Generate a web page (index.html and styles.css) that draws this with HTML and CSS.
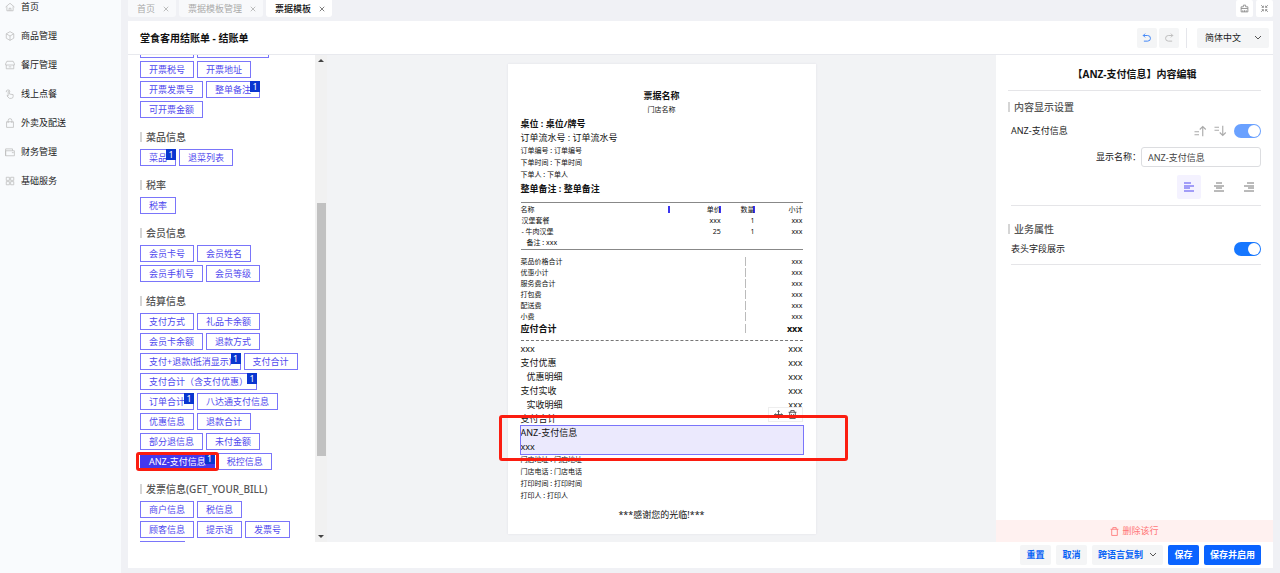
FILE: index.html
```
<!DOCTYPE html>
<html lang="zh-CN">
<head>
    <meta charset="UTF-8">
    <meta name="viewport" content="width=device-width, initial-scale=1.0">
    <title>票据模板</title>
    <link rel="stylesheet" href="styles.css">
</head>
<body>
    <nav class="sidebar">
        <a href="#" class="nav-item">
            <svg class="icon" viewBox="0 0 16 16"><path d="M1 8l7-6 7 6M3 7v7h10V7M6.500 14v-4h3v4"/></svg>首页
        </a>
        <a href="#" class="nav-item">
            <svg class="icon" viewBox="0 0 16 16"><path d="M8 1l6 3.500v7L8 15l-6-3.500v-7zM2 4.500L8 8l6-3.500M8 8v7"/></svg>商品管理
        </a>
        <a href="#" class="nav-item">
            <svg class="icon" viewBox="0 0 16 16"><path d="M3 2h10l2 4v2H1V6zM2 8v6h12V8M6 11h4"/></svg>餐厅管理
        </a>
        <a href="#" class="nav-item">
            <svg class="icon" viewBox="0 0 16 16"><path d="M2 5a3 3 0 0 1 6-1M5 4v7l-2-1M5 4q1-1 2 0v4l6 1v3q0 3-3 3H7l-4-4"/></svg>线上点餐
        </a>
        <a href="#" class="nav-item">
            <svg class="icon" viewBox="0 0 16 16"><path d="M2.500 6h11v9h-11zM5 8V4a3 3 0 0 1 6 0v4"/></svg>外卖及配送
        </a>
        <a href="#" class="nav-item">
            <svg class="icon" viewBox="0 0 16 16"><path d="M1 14V3h11v3M1 6h14v8H1zM11 9h3"/></svg>财务管理
        </a>
        <a href="#" class="nav-item">
            <svg class="icon" viewBox="0 0 16 16"><path d="M2 2h5v5H2zM9 2h5v5H9zM2 9h5v5H2zM9 9h5v5H9z"/></svg>基础服务
        </a>
    </nav>

    <div class="main">
        <div class="tabs">
            <a href="#" class="tab">首页<svg class="close" viewBox="0 0 8 8"><path d="M1 1l6 6M7 1L1 7"/></svg></a>
            <a href="#" class="tab">票据模板管理<svg class="close" viewBox="0 0 8 8"><path d="M1 1l6 6M7 1L1 7"/></svg></a>
            <a href="#" class="tab active">票据模板<svg class="close" viewBox="0 0 8 8"><path d="M1 1l6 6M7 1L1 7"/></svg></a>
            <div class="tab-tools">
                <button class="tab-tool" aria-label="清理"><svg class="icon" viewBox="0 0 16 16"><path d="M2 14V5h4V2h4v3h4v9zM2 8h12M5 14v-3M8 14v-3M11 14v-3"/></svg></button>
                <button class="tab-tool" aria-label="全屏"><svg class="icon" viewBox="0 0 16 16"><path d="M2 2l4 4M6 3v3H3M14 2l-4 4M10 3v3h3M2 14l4-4M3 10h3v3M14 14l-4-4M10 13v-3h3"/></svg></button>
            </div>
        </div>

        <div class="editor">
            <header class="editor-header">
                <h1 class="editor-title">堂食客用结账单 - 结账单</h1>
                <button class="tool undo" aria-label="撤销"><svg class="icon" viewBox="0 0 16 16"><path d="M5 1L2 4l3 3M2 4h7a4.500 4.500 0 0 1 0 9H3"/></svg></button>
                <button class="tool" aria-label="重做"><svg class="icon" viewBox="0 0 16 16"><path d="M11 1l3 3-3 3M14 4H7a4.500 4.500 0 0 0 0 9h6"/></svg></button>
                <span class="divider"></span>
                <div class="language">
                    <select aria-label="语言">
                        <option>简体中文</option>
                    </select>
                    <svg class="chevron" viewBox="0 0 8 8"><path d="M1 2l3 3 3-3"/></svg>
                </div>
            </header>

            <div class="editor-body">
                <aside class="fields">
                    <div class="field-list">
                        <div class="chips">
                            <div class="chip-row"><button class="chip">开票抬头</button><button class="chip">开票联系电话</button></div>
                            <div class="chip-row"><button class="chip">开票税号</button><button class="chip">开票地址</button></div>
                            <div class="chip-row"><button class="chip">开票发票号</button><button class="chip">整单备注<span class="badge">1</span></button></div>
                            <div class="chip-row"><button class="chip">可开票金额</button></div>
                        </div>
                        <h2 class="section-title">菜品信息</h2>
                        <div class="chips">
                            <div class="chip-row"><button class="chip">菜品<span class="badge">1</span></button><button class="chip">退菜列表</button></div>
                        </div>
                        <h2 class="section-title">税率</h2>
                        <div class="chips">
                            <div class="chip-row"><button class="chip">税率</button></div>
                        </div>
                        <h2 class="section-title">会员信息</h2>
                        <div class="chips">
                            <div class="chip-row"><button class="chip">会员卡号</button><button class="chip">会员姓名</button></div>
                            <div class="chip-row"><button class="chip">会员手机号</button><button class="chip">会员等级</button></div>
                        </div>
                        <h2 class="section-title">结算信息</h2>
                        <div class="chips">
                            <div class="chip-row"><button class="chip">支付方式</button><button class="chip">礼品卡余额</button></div>
                            <div class="chip-row"><button class="chip">会员卡余额</button><button class="chip">退款方式</button></div>
                            <div class="chip-row"><button class="chip">支付+退款(抵消显示)<span class="badge">1</span></button><button class="chip">支付合计</button></div>
                            <div class="chip-row"><button class="chip">支付合计（含支付优惠）<span class="badge">1</span></button></div>
                            <div class="chip-row"><button class="chip">订单合计<span class="badge">1</span></button><button class="chip">八达通支付信息</button></div>
                            <div class="chip-row"><button class="chip">优惠信息</button><button class="chip">退款合计</button></div>
                            <div class="chip-row"><button class="chip">部分退信息</button><button class="chip">未付金额</button></div>
                            <div class="chip-row"><button class="chip selected">ANZ-支付信息<span class="badge">1</span><span class="mark"></span></button><button class="chip">税控信息</button></div>
                        </div>
                        <h2 class="section-title">发票信息(GET_YOUR_BILL)</h2>
                        <div class="chips">
                            <div class="chip-row"><button class="chip">商户信息</button><button class="chip">税信息</button></div>
                            <div class="chip-row"><button class="chip">顾客信息</button><button class="chip">提示语</button><button class="chip">发票号</button></div>
                            <div class="chip-row"><button class="chip">交易号</button></div>
                        </div>
                    </div>
                    <div class="scrollbar">
                        <span class="arrow-up"></span>
                        <span class="track-before"></span>
                        <span class="thumb"></span>
                        <span class="track-after"></span>
                        <span class="arrow-down"></span>
                    </div>
                </aside>

                <main class="canvas">
                    <div class="receipt">
                        <p class="line center bold">票据名称</p>
                        <p class="line center small">门店名称</p>
                        <p class="line bold">桌位 : 桌位/牌号</p>
                        <p class="line">订单流水号 : 订单流水号</p>
                        <div class="small-lines">
                            <p>订单编号 : 订单编号</p>
                            <p>下单时间 : 下单时间</p>
                            <p>下单人 : 下单人</p>
                        </div>
                        <p class="line note bold">整单备注 : 整单备注</p>

                        <table class="dishes">
                            <tr><th class="resize">名称</th><th class="resize">单价</th><th class="resize">数量</th><th>小计</th></tr>
                            <tr><td>汉堡套餐</td><td>xxx</td><td>1</td><td>xxx</td></tr>
                            <tr><td>- 牛肉汉堡</td><td>25</td><td>1</td><td>xxx</td></tr>
                            <tr><td class="indent">备注 : xxx</td><td></td><td></td><td></td></tr>
                        </table>

                        <dl class="totals">
                            <div><dt>菜品价格合计</dt><dd>xxx</dd></div>
                            <div><dt>优惠小计</dt><dd>xxx</dd></div>
                            <div><dt>服务费合计</dt><dd>xxx</dd></div>
                            <div><dt>打包费</dt><dd>xxx</dd></div>
                            <div><dt>配送费</dt><dd>xxx</dd></div>
                            <div><dt>小费</dt><dd>xxx</dd></div>
                            <div class="due"><dt>应付合计</dt><dd>xxx</dd></div>
                        </dl>

                        <dl class="payments">
                            <div><dt>xxx</dt><dd>xxx</dd></div>
                            <div><dt>支付优惠</dt><dd>xxx</dd></div>
                            <div><dt class="indent">优惠明细</dt><dd>xxx</dd></div>
                            <div><dt>支付实收</dt><dd>xxx</dd></div>
                            <div><dt class="indent">实收明细</dt><dd>xxx</dd></div>
                            <div><dt>支付合计</dt><dd>xxx</dd></div>
                        </dl>

                        <div class="picked">
                            <p>ANZ-支付信息</p>
                            <p>xxx</p>
                            <div class="picked-tools">
                                <button aria-label="移动"><svg class="icon" viewBox="0 0 16 16"><path d="M8 1v14M1 8h14M6 3l2-2 2 2M6 13l2 2 2-2M3 6L1 8l2 2M13 6l2 2-2 2"/></svg></button>
                                <button aria-label="删除"><svg class="icon" viewBox="0 0 16 16"><path d="M1 4h14M5 4V1h6v3M3 4v11h10V4M6 7v5M10 7v5"/></svg></button>
                            </div>
                            <span class="mark"></span>
                        </div>

                        <div class="small-lines">
                            <p>门店地址 : 门店地址</p>
                            <p>门店电话 : 门店电话</p>
                            <p>打印时间 : 打印时间</p>
                            <p>打印人 : 打印人</p>
                        </div>
                        <p class="line thanks center">***感谢您的光临!***</p>
                    </div>
                </main>

                <aside class="settings">
                    <div class="settings-content">
                        <h2 class="settings-title">【ANZ-支付信息】内容编辑</h2>
                        <h3 class="section-title">内容显示设置</h3>
                        <div class="group">
                            <div class="setting">
                                <label for="showPayment">ANZ-支付信息</label>
                                <button class="sort" aria-label="上移"><svg class="icon" viewBox="0 0 16 16"><path d="M0 9h6M0 13h6M11 15V2M7 6l4-4 4 4"/></svg></button>
                                <button class="sort" aria-label="下移"><svg class="icon" viewBox="0 0 16 16"><path d="M0 3h6M0 7h6M11 1v13M7 10l4 4 4-4"/></svg></button>
                                <input type="checkbox" id="showPayment" class="switch light" checked>
                            </div>
                            <div class="name-row">
                                <label for="displayName">显示名称：</label>
                                <input type="text" id="displayName" value="ANZ-支付信息">
                            </div>
                            <div class="align-row">
                                <button class="align on" aria-label="左对齐"><svg class="icon" viewBox="0 0 10 10"><path d="M0 1h7M0 4h10M0 6h6M0 9h10"/></svg></button>
                                <button class="align" aria-label="居中"><svg class="icon" viewBox="0 0 10 10"><path d="M2 1h6M0 4h10M2 6h6M0 9h10"/></svg></button>
                                <button class="align" aria-label="右对齐"><svg class="icon" viewBox="0 0 10 10"><path d="M3 1h7M0 4h10M4 6h6M0 9h10"/></svg></button>
                            </div>
                        </div>
                        <h3 class="section-title second">业务属性</h3>
                        <div class="group">
                            <div class="setting">
                                <label for="showHeader">表头字段展示</label>
                                <input type="checkbox" id="showHeader" class="switch" checked>
                            </div>
                        </div>
                    </div>
                    <button class="delete-row"><svg class="icon" viewBox="0 0 16 16"><path d="M1 4h14M5 4V1h6v3M3 4v11h10V4"/></svg>删除该行</button>
                </aside>
            </div>

            <footer class="editor-footer">
                <button class="btn">重置</button>
                <button class="btn">取消</button>
                <button class="btn">跨语言复制<svg class="chevron" viewBox="0 0 8 8"><path d="M1 2l3 3 3-3"/></svg></button>
                <button class="btn primary">保存</button>
                <button class="btn primary">保存并启用</button>
            </footer>
        </div>
    </div>
</body>
</html>
```

FILE: styles.css
```
* {
    box-sizing: border-box;
}

body {
    display: flex;
    height: 100vh;
    margin: 0;
    overflow: hidden;
    background: #f0f1f5;
    color: #222;
    font-family: "Noto Sans", "Noto Sans CJK SC", sans-serif;
    font-size: 9px;
    line-height: 14px;
}

h1, h2, h3, p, dl, dd {
    margin: 0;
}

button, input, select {
    padding: 0;
    border: 0;
    background: none;
    color: inherit;
    font: inherit;
}

a {
    color: inherit;
    text-decoration: none;
}

svg {
    flex: none;
    fill: none;
    stroke: currentColor;
}

.icon {
    width: 10px;
    height: 10px;
    stroke-width: 1.5;
}

.chevron {
    width: 8px;
    height: 8px;
    color: #555;
}

/* Left navigation */
.sidebar {
    flex: none;
    width: 121px;
    background: #f9fbfd;
}

.nav-item {
    display: flex;
    align-items: center;
    gap: 6px;
    height: 14px;
    margin-bottom: 15px;
    padding-left: 5px;
}

.nav-item .icon {
    color: #bbb;
    stroke-width: 1.2;
}

/* Tabs */
.main {
    display: flex;
    flex: 1;
    flex-direction: column;
    min-width: 0;
    padding: 0 7px 5px;
}

.tabs {
    display: flex;
    flex: none;
    gap: 3px;
    height: 17px;
    margin-bottom: 4px;
}

.tab {
    display: flex;
    align-items: center;
    gap: 8px;
    padding: 0 7px 0 9px;
    border-radius: 0 0 3px 3px;
    background: #f8f9fb;
    color: #aaa;
}

.tab.active {
    background: #fff;
    color: #111;
    font-weight: 500;
}

.close {
    width: 6px;
    height: 6px;
}

.tab.active .close {
    color: #555;
}

.tab-tools {
    display: flex;
    gap: 3px;
    margin-left: auto;
}

.tab-tool {
    display: flex;
    align-items: center;
    justify-content: center;
    width: 17px;
    border-radius: 2px;
    background: #fff;
    color: #888;
}

.tab-tool .icon {
    width: 9px;
    height: 9px;
}

/* Editor */
.editor {
    display: flex;
    flex: 1;
    flex-direction: column;
    min-height: 0;
    background: #fff;
}

.editor-header {
    display: flex;
    flex: none;
    align-items: center;
    gap: 2px;
    height: 34px;
    padding: 0 4px 0 12px;
    border-bottom: 1px solid #e8e9ee;
}

.editor-title {
    margin-right: auto;
    color: #111;
    font-size: 10px;
    font-weight: bold;
}

.tool {
    display: flex;
    align-items: center;
    justify-content: center;
    width: 20px;
    height: 20px;
    border-radius: 2px;
    background: #f4f5f6;
    color: #bbb;
}

.tool.undo {
    color: #3b82f6;
}

.divider {
    width: 1px;
    height: 20px;
    margin: 0 8px 0 5px;
    background: #e5e6eb;
}

.language {
    display: flex;
    align-items: center;
    width: 72px;
    height: 20px;
    padding: 0 7px 0 8px;
    border-radius: 2px;
    background: #f4f5f6;
}

.language select {
    flex: 1;
    appearance: none;
}

.editor-body {
    display: flex;
    flex: 1;
    min-height: 0;
}

/* Field list */
.fields {
    display: flex;
    flex: none;
    width: 199px;
    overflow: hidden;
}

.field-list {
    flex: 1;
    height: 100%;
    margin-top: -14px;
    padding-left: 12px;
}

.section-title {
    display: flex;
    align-items: center;
    gap: 4px;
    height: 14px;
    margin: 12px 0 5px;
    color: #555;
    font-size: 10px;
    font-weight: 500;
}

.section-title::before {
    content: "";
    width: 2px;
    height: 10px;
    background: #d5d5d5;
}

.chips {
    display: flex;
    flex-direction: column;
    gap: 3px;
}

.chip-row {
    display: flex;
    gap: 3px;
}

.chip {
    position: relative;
    height: 17px;
    padding: 0 8px;
    border: 1px solid #7a75fa;
    background: #fff;
    color: #4f49ee;
    line-height: 15px;
    white-space: nowrap;
}

.chip.selected {
    border-color: #4338ee;
    background: #4338ee;
    color: #fff;
}

.badge {
    position: absolute;
    top: -1px;
    right: -1px;
    width: 10px;
    height: 11px;
    background: #0a36d0;
    color: #fff;
    line-height: 11px;
}

.mark {
    position: absolute;
    border: 3px solid #fb1d10;
    border-radius: 3px;
    pointer-events: none;
}

.chip .mark {
    z-index: 1;
    inset: -2px -5px;
}

.scrollbar {
    display: flex;
    flex: none;
    flex-direction: column;
    align-items: center;
    width: 12px;
    padding: 4px 0;
    background: #f1f1f1;
}

.arrow-up, .arrow-down {
    border: 3px solid transparent;
}

.arrow-up {
    border-top-width: 0;
    border-bottom-color: #444;
}

.arrow-down {
    border-bottom-width: 0;
    border-top-color: #444;
}

.track-before {
    flex: 141;
}

.thumb {
    flex: 252;
    width: 9px;
    background: #c1c1c1;
}

.track-after {
    flex: 79;
}

/* Receipt */
.canvas {
    display: flex;
    flex: 1;
    align-items: flex-start;
    justify-content: center;
    padding-top: 9px;
    background: #f2f3f5;
}

.receipt {
    width: 308px;
    padding: 25px 13px 12px;
    background: #fff;
    box-shadow: 0 0 2px #e0e0e6;
    color: #111;
}

.center {
    text-align: center;
}

.bold {
    font-weight: bold;
}

.small, .small-lines {
    font-size: 7px;
}

.small-lines {
    line-height: 12px;
}

.note {
    line-height: 16px;
}

.indent {
    padding-left: 6px;
}

.dishes {
    width: 100%;
    margin-top: 5px;
    padding: 1px 0;
    border-top: 1px solid #888;
    border-bottom: 1px solid #888;
    border-spacing: 0;
    table-layout: fixed;
    font-size: 7px;
    line-height: 11px;
}

.dishes th, .dishes td {
    height: 11px;
    padding-top: 0;
    padding-right: 0;
    padding-bottom: 0;
    font-weight: normal;
    text-align: right;
}

.dishes th {
    width: 17%;
    padding-left: 0;
}

.dishes tr > :first-child {
    text-align: left;
}

.dishes th:nth-child(1) {
    width: 53%;
}

.dishes th:nth-child(2) {
    width: 18%;
}

.dishes th:nth-child(3) {
    width: 12%;
}

/* Column drag handles */
.resize {
    background: linear-gradient(#3b34f0, #3b34f0) right center / 2px 7px no-repeat;
}

.totals {
    padding: 6px 0 5px;
    border-bottom: 1px dashed #777;
    font-size: 7px;
    line-height: 11px;
}

.totals div {
    display: flex;
}

.totals dt {
    width: 80%;
    background: linear-gradient(#bbb, #bbb) right center / 1px 9px no-repeat;
}

.totals dd {
    flex: 1;
    text-align: right;
}

.totals .due {
    font-size: 9px;
    font-weight: bold;
    line-height: 13px;
}

.payments {
    padding-top: 1px;
}

.payments div {
    display: flex;
    justify-content: space-between;
}

.picked {
    position: relative;
    background: #ebe9fd;
    outline: 1px solid #7a75fa;
}

.picked .mark {
    inset: -11px -45px -7px -22px;
}

.picked-tools {
    position: absolute;
    top: -19px;
    right: 0;
    display: flex;
    gap: 5px;
    padding: 2px 5px;
    border: 1px solid #eee;
    background: #fff;
    color: #444;
}

.picked-tools button {
    display: flex;
}

.picked-tools .icon {
    width: 9px;
    height: 9px;
}

.thanks {
    margin-top: 6px;
}

/* Settings panel */
.settings {
    display: flex;
    flex: none;
    flex-direction: column;
    justify-content: space-between;
    width: 277px;
}

.settings-content {
    padding: 0 12px;
}

.settings-title {
    padding: 12px 0 9px;
    border-bottom: 1px solid #e5e5e8;
    color: #111;
    font-size: 10px;
    font-weight: bold;
    text-align: center;
}

.settings .section-title {
    margin: 9px 0 10px;
}

.settings .section-title.second {
    margin: 16px 0 6px;
}

.group {
    margin-left: 3px;
    padding-bottom: 8px;
    border-bottom: 1px solid #e5e5e8;
}

.group:first-of-type {
    padding-bottom: 6px;
}

.setting {
    display: flex;
    align-items: center;
    gap: 5px;
}

.setting label {
    margin-right: auto;
}

.sort {
    display: flex;
    color: #aaa;
}

.sort .icon {
    width: 13px;
    height: 12px;
    margin-right: 2px;
}

.switch {
    display: flex;
    width: 27px;
    height: 14px;
    margin: 0;
    padding: 1px;
    border-radius: 7px;
    appearance: none;
    background: #c9cdd4;
}

.switch::before {
    content: "";
    width: 12px;
    height: 12px;
    border-radius: 50%;
    background: #fff;
}

.switch:checked {
    justify-content: flex-end;
    background: #1677ff;
}

.switch.light:checked {
    background: #6aa1ff;
}

.name-row {
    display: flex;
    align-items: center;
    justify-content: flex-end;
    margin-top: 9px;
}

.name-row input {
    width: 120px;
    height: 20px;
    padding: 0 6px;
    border: 1px solid #dcdde0;
    border-radius: 3px;
    color: #444;
}

.align-row {
    display: flex;
    justify-content: flex-end;
    gap: 6px;
    margin-top: 8px;
}

.align {
    display: flex;
    align-items: center;
    justify-content: center;
    width: 24px;
    height: 24px;
    border-radius: 2px;
    color: #777;
}

.align .icon {
    stroke-width: 1;
}

.align.on {
    background: #f4f2ff;
    color: #5048f0;
}

.delete-row {
    display: flex;
    align-items: center;
    justify-content: center;
    gap: 3px;
    height: 22px;
    background: #fff1f0;
    color: #f77;
}

.delete-row .icon {
    width: 9px;
    height: 9px;
}

/* Footer */
.editor-footer {
    display: flex;
    flex: none;
    align-items: center;
    justify-content: flex-end;
    gap: 5px;
    height: 26px;
    padding-right: 12px;
}

.btn {
    display: flex;
    align-items: center;
    justify-content: center;
    gap: 6px;
    min-width: 31px;
    height: 20px;
    padding: 0 6px;
    border-radius: 2px;
    background: #f4f5f6;
    color: #0a63f5;
    font-weight: bold;
}

.btn.primary {
    background: #0a63ff;
    color: #fff;
}
```
